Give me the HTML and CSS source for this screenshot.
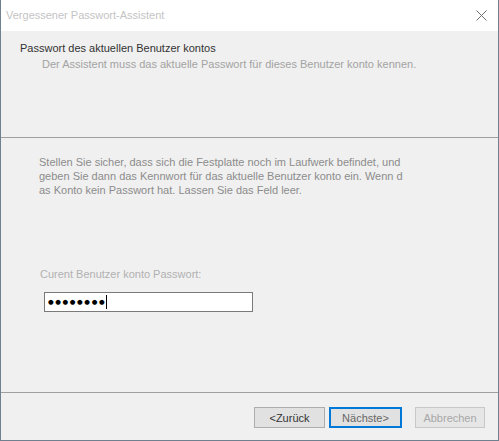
FILE: index.html
```html
<!DOCTYPE html>
<html lang="de">
<head>
<meta charset="utf-8">
<link rel="stylesheet" href="styles.css">
</head>
<body>
<div class="window">
  <div class="titlebar">
    <span class="title">Vergessener Passwort-Assistent</span>
    <svg class="close" width="11" height="11" viewBox="0 0 11 11"><path d="M0.5 0.5 L10.5 10.5 M10.5 0.5 L0.5 10.5" stroke="#6d6d6d" stroke-width="1" fill="none"/></svg>
  </div>
  <div class="header">
    <div class="h-title">Passwort des aktuellen Benutzer kontos</div>
    <div class="h-sub">Der Assistent muss das aktuelle Passwort für dieses Benutzer konto kennen.</div>
  </div>
  <div class="content">
    <p class="info">Stellen Sie sicher, dass sich die Festplatte noch im Laufwerk befindet, und<br>geben Sie dann das Kennwort für das aktuelle Benutzer konto ein. Wenn d<br>as Konto kein Passwort hat. Lassen Sie das Feld leer.</p>
    <label class="label" for="pw">Curent Benutzer konto Passwort:</label>
    <div class="input"><span class="dots">●●●●●●●●</span><span class="caret"></span></div>
  </div>
  <div class="footer">
    <button class="btn">&lt;Zurück</button>
    <button class="btn primary">Nächste&gt;</button>
    <button class="btn disabled">Abbrechen</button>
  </div>
</div>
</body>
</html>
```
FILE: styles.css
```css
* { box-sizing: border-box; }
html, body { margin: 0; padding: 0; }
body { font-family: "Liberation Sans", Arial, sans-serif; font-size: 11px; background: #f0f0f0; }
.window {
  width: 499px; height: 441px;
  border: 1px solid #71808f; border-top: none;
  display: flex; flex-direction: column;
  background: #f0f0f0;
}
.titlebar {
  height: 31px; background: #fff;
  display: flex; align-items: center; justify-content: space-between;
  padding: 0 11px 0 5px;
}
.title { color: #c4c4c4; font-size: 11px; margin-top: -1px; }
.close { margin-top: -1px; }
.header {
  height: 107px;
  border-bottom: 1px solid #a0a0a0;
  padding: 10px 0 0 19px;
}
.h-title { color: #333; line-height: 14px; }
.h-sub { color: #a3a3a3; line-height: 14px; margin-top: 2px; padding-left: 22px; }
.content { flex: 1; padding: 17px 0 0 38px; border-bottom: 1px solid #a0a0a0; }
.info { margin: 0; color: #8c8c8c; line-height: 14px; }
.label { display: block; margin-top: 70px; padding-left: 1px; color: #b0b0b0; line-height: 14px; }
.input {
  margin: 11px 0 0 5px;
  width: 209px; height: 20px;
  background: #fff; border: 1px solid #7a7a7a;
  display: flex; align-items: center; padding-left: 3px;
}
.dots { font-family: "DejaVu Sans", sans-serif; font-size: 6.5px; letter-spacing: 1.6px; color: #000; }
.caret { width: 1px; height: 14px; background: #000; margin-left: 0; }
.footer {
  height: 47px;
  display: flex; align-items: flex-start; justify-content: flex-end;
  padding: 14px 13px 0 0; gap: 0;
}
.btn {
  height: 21px; font-family: "Liberation Sans", Arial, sans-serif; font-size: 11px;
  background: #e1e1e1; border: 1px solid #adadad; color: #333;
  padding: 0; margin: 0;
}
.btn:nth-child(1) { width: 71px; }
.btn.primary { width: 73px; margin-left: 4px; border: 2px solid #0078d7; color: #666; }
.btn.disabled { width: 70px; margin-left: 13px; color: #a8a8a8; background: #e6e6e6; border-color: #c8c8c8; }
```
